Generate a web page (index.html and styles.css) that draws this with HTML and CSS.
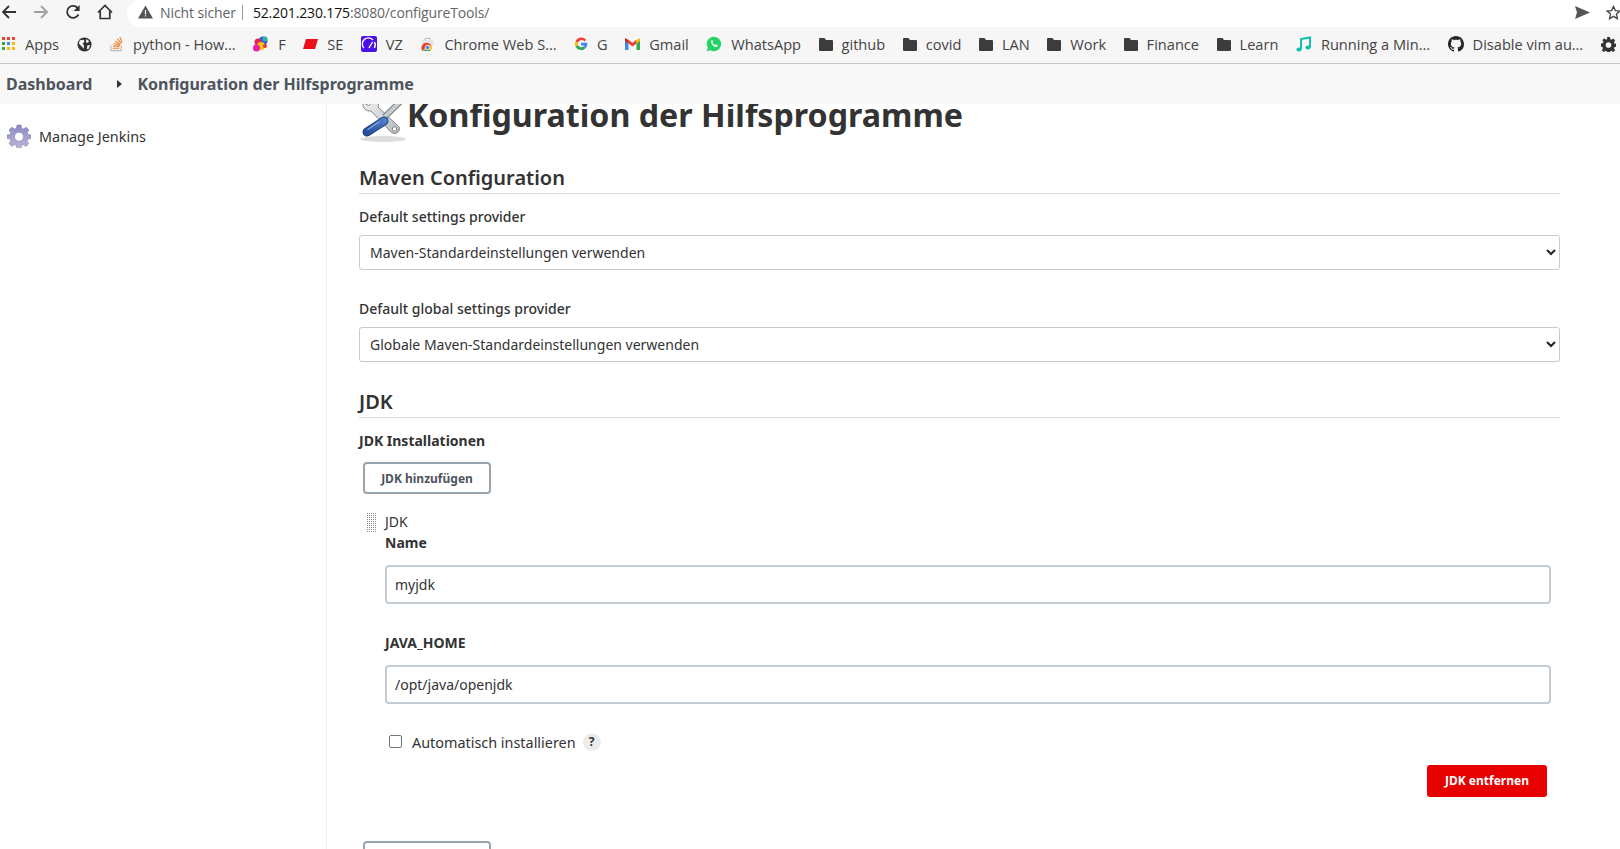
FILE: index.html
```html
<!DOCTYPE html>
<html lang="de">
<head>
<meta charset="utf-8">
<title>Konfiguration der Hilfsprogramme</title>
<link rel="stylesheet" href="styles.css">
</head>
<body>
<header class="toolbar">
  <svg class="nav" width="16" height="16" viewBox="0 0 16 16"><path d="M15 8H2M8 2 2 8l6 6" fill="none" stroke="#333" stroke-width="1.8"/></svg>
  <svg class="nav" width="16" height="16" viewBox="0 0 16 16"><path d="M1 8h13M8 2l6 6-6 6" fill="none" stroke="#a0a0a0" stroke-width="1.8"/></svg>
  <svg class="nav" width="16" height="16" viewBox="0 0 16 16"><path d="M13.5 10.5A6 6 0 1 1 13 4.4" fill="none" stroke="#333" stroke-width="1.8"/><path d="M14.6 1v6h-6z" fill="#333"/></svg>
  <svg class="nav" width="16" height="16" viewBox="0 0 16 16"><path d="M1 8.5 8 1.5l7 7M3.2 7v7.5h9.6V7" fill="none" stroke="#333" stroke-width="1.7"/></svg>
  <div class="omnibox">
    <svg width="15" height="14" viewBox="0 0 15 14"><path d="M7.5.5 15 13.5H0z" fill="#555"/><path d="M6.9 5h1.2v4.4H6.9zM6.9 10.2h1.2v1.3H6.9z" fill="#fff"/></svg>
    <span class="insecure">Nicht sicher</span>
    <span class="url"><b>52.201.230.175</b>:8080/configureTools/</span>
    <svg class="send" width="15" height="13" viewBox="0 0 15 13"><path d="M0 0 15 6.500 0 13l2-6.500z" fill="#555"/></svg>
    <svg class="star" width="15" height="15" viewBox="0 0 16 16"><path d="m8 1.500 2 4.500 4.800.5-3.600 3.200 1 4.800L8 12.100l-4.200 2.400 1-4.800L1.200 6.500 6 6z" fill="none" stroke="#444" stroke-width="1.400"/></svg>
  </div>
</header>
<nav class="bookmarks">
  <span class="bm bm-apps"><svg width="14" height="14" viewBox="0 0 14 14"><path d="M0 0h3v3H0z" fill="#ea4335"/><path d="M5 0h3v3H5z" fill="#ea4335"/><path d="M10 0h3v3h-3z" fill="#ea4335"/><path d="M0 5h3v3H0z" fill="#34a853"/><path d="M5 5h3v3H5z" fill="#4285f4"/><path d="M10 5h3v3h-3z" fill="#fbbc05"/><path d="M0 10h3v3H0z" fill="#34a853"/><path d="M5 10h3v3H5z" fill="#fbbc05"/><path d="M10 10h3v3h-3z" fill="#fbbc05"/></svg>Apps</span>
  <span class="bm bm-noname"><svg width="15" height="15" viewBox="0 0 16 16"><circle cx="8" cy="8" r="7.500" fill="#333"/><path d="M3 3.500 7 3l1 2-2 2 1.500 2-.5 3.500-2-2.500L2 7zM10 2l3 2.500-1.500 1.500-2-.5zM11 9l3-.5-1.500 4-2 .5z" fill="#f6f6f6"/></svg></span>
  <span class="bm"><svg width="15" height="16" viewBox="0 0 16 17"><path d="M2 10v5.500h11V10" fill="none" stroke="#bbb" stroke-width="1.300"/><path d="M4 13h7M4.300 10.500l6.800.8M5 8l6.500 2M6.500 5.500l5.500 3.500M9 3l4 5M11.500 1l2.500 6" stroke="#f48024" stroke-width="1.200" fill="none"/></svg>python - How…</span>
  <span class="bm"><svg width="16" height="16" viewBox="0 0 16 16"><circle cx="10" cy="5" r="4.500" fill="#3c55d8"/><circle cx="12" cy="3" r="2.500" fill="#27b8a8"/><circle cx="5" cy="6" r="3.500" fill="#e3245c"/><circle cx="8" cy="10" r="4" fill="#f7c514"/><circle cx="3.500" cy="12" r="3.500" fill="#e81fae"/><circle cx="12" cy="10" r="2" fill="#e8352c"/></svg>F</span>
  <span class="bm"><svg width="15" height="10" viewBox="0 0 15 10"><path d="M3 0h12l-3 10H0z" fill="#e8101a"/></svg>SE</span>
  <span class="bm"><svg width="16" height="16" viewBox="0 0 16 16"><rect width="16" height="16" rx="2" fill="#4b12e8"/><path d="M2.800 12A6 6 0 0 1 12 4" fill="none" stroke="#fff" stroke-width="1.400"/><path d="M13.500 6A6 6 0 0 1 13.300 12M8 12l3.500-6" fill="none" stroke="#fff" stroke-width="1.400"/></svg>VZ</span>
  <span class="bm"><svg width="15" height="16" viewBox="0 0 15 16"><path d="M5 4V2.500h5V4" fill="none" stroke="#bbb"/><path d="M1.500 4h12l.8 5H.7z" fill="#e6e6e6"/><path d="M2.500 15a5 5 0 0 1 5-8 5 5 0 0 1 4.300 2.500H7.500z" fill="#e34133"/><path d="M3 15 7.500 9.500l4.300 0A5 5 0 0 1 10 15z" fill="#fbc116"/><path d="M3 15h7.500l-3 -3z" fill="#32a651"/><circle cx="7.500" cy="11.500" r="2.200" fill="#4285f4" stroke="#fff" stroke-width=".8"/></svg>Chrome Web S…</span>
  <span class="bm"><svg width="14" height="14" viewBox="0 0 14 14"><path d="M12.200 2.800A6.300 6.300 0 0 0 1.500 4.200L4 6a3.600 3.600 0 0 1 6.400-1.500z" fill="#ea4335"/><path d="M1.500 4.200a6.300 6.300 0 0 0 0 5.600L4 8a3.600 3.600 0 0 1 0-2z" fill="#fbbc05"/><path d="M1.500 9.800a6.300 6.300 0 0 0 10 1.500L9.200 9.600A3.600 3.600 0 0 1 4 8z" fill="#34a853"/><path d="M13.300 5.800H7v2.600h3.500a3 3 0 0 1-1.300 1.200l2.300 1.700a6.300 6.300 0 0 0 1.800-5.500z" fill="#4285f4"/></svg>G</span>
  <span class="bm"><svg width="15" height="12" viewBox="0 0 15 12"><path d="M0 2v10h3.500V4.500z" fill="#4285f4"/><path d="M11.500 4.500V12H15V2z" fill="#34a853"/><path d="M0 0v3l3.500 2.500V2z" fill="#c5221f"/><path d="M3.500 1.500 7.500 5l4-3.500v4l-4 3-4-3z" fill="#ea4335"/><path d="M11.500 2v3.500L15 3V0z" fill="#fbbc05"/></svg>Gmail</span>
  <span class="bm"><svg width="16" height="16" viewBox="0 0 16 16"><path d="M8 .700a7.200 7.200 0 0 0-6.200 10.900L.8 15.300l3.800-1A7.200 7.200 0 1 0 8 .700z" fill="#25d366"/><path d="M5.600 4.300c-1 1-.8 2.500.5 4.200 1.500 1.900 3.300 2.900 4.500 2.300 1-.5 1.100-1.300 1-1.600l-1.700-.9-.8.900c-.9-.2-2.300-1.500-2.700-2.600l.7-.8-.8-1.800z" fill="#fff"/></svg>WhatsApp</span>
  <span class="bm"><svg class="folder" viewBox="0 0 14 13"><path d="M1 0h4.500L7 2h6a1 1 0 0 1 1 1v9a1 1 0 0 1-1 1H1a1 1 0 0 1-1-1V1a1 1 0 0 1 1-1z"/></svg>github</span>
  <span class="bm"><svg class="folder" viewBox="0 0 14 13"><path d="M1 0h4.500L7 2h6a1 1 0 0 1 1 1v9a1 1 0 0 1-1 1H1a1 1 0 0 1-1-1V1a1 1 0 0 1 1-1z"/></svg>covid</span>
  <span class="bm"><svg class="folder" viewBox="0 0 14 13"><path d="M1 0h4.500L7 2h6a1 1 0 0 1 1 1v9a1 1 0 0 1-1 1H1a1 1 0 0 1-1-1V1a1 1 0 0 1 1-1z"/></svg>LAN</span>
  <span class="bm"><svg class="folder" viewBox="0 0 14 13"><path d="M1 0h4.500L7 2h6a1 1 0 0 1 1 1v9a1 1 0 0 1-1 1H1a1 1 0 0 1-1-1V1a1 1 0 0 1 1-1z"/></svg>Work</span>
  <span class="bm"><svg class="folder" viewBox="0 0 14 13"><path d="M1 0h4.500L7 2h6a1 1 0 0 1 1 1v9a1 1 0 0 1-1 1H1a1 1 0 0 1-1-1V1a1 1 0 0 1 1-1z"/></svg>Finance</span>
  <span class="bm"><svg class="folder" viewBox="0 0 14 13"><path d="M1 0h4.500L7 2h6a1 1 0 0 1 1 1v9a1 1 0 0 1-1 1H1a1 1 0 0 1-1-1V1a1 1 0 0 1 1-1z"/></svg>Learn</span>
  <span class="bm"><svg width="16" height="16" viewBox="0 0 16 16"><path d="M5 13V3l9-1.500V11" fill="none" stroke="#10bfae" stroke-width="2"/><ellipse cx="3" cy="13.500" rx="2.600" ry="2" fill="#10bfae"/><ellipse cx="12" cy="11.500" rx="2.600" ry="2" fill="#10bfae"/></svg>Running a Min…</span>
  <span class="bm"><svg width="16" height="16" viewBox="0 0 16 16"><path fill="#24292e" d="M8 0C3.580 0 0 3.580 0 8c0 3.540 2.290 6.530 5.470 7.590.4.070.55-.17.55-.38 0-.19-.01-.82-.01-1.490-2.010.37-2.530-.49-2.690-.94-.09-.23-.48-.94-.82-1.130-.28-.15-.68-.52-.01-.53.630-.01 1.080.58 1.230.82.720 1.210 1.870.87 2.330.66.070-.52.280-.87.510-1.070-1.780-.2-3.640-.89-3.640-3.950 0-.87.310-1.590.820-2.150-.08-.2-.36-1.020.08-2.120 0 0 .67-.21 2.200.82.640-.18 1.320-.27 2-.27s1.360.09 2 .27c1.530-1.040 2.200-.82 2.200-.82.440 1.100.16 1.920.08 2.120.51.560.82 1.270.82 2.150 0 3.070-1.870 3.750-3.650 3.950.29.250.54.730.54 1.480 0 1.070-.01 1.930-.01 2.200 0 .21.150.46.550.38A8.010 8.010 0 0 0 16 8c0-4.420-3.580-8-8-8z"/></svg>Disable vim au…</span>
  <svg class="bm-gear" width="15" height="15" viewBox="0 0 16 16"><path fill="#333" fill-rule="evenodd" d="M6.500 0h3l.4 2.300 1.300.6L13.100 1.500l2 2.300-1.300 1.800.5 1.300 2.200.5v3l-2.200.4-.5 1.300 1.300 1.900-2 2-2-1.300-1.200.5-.4 2.300h-3l-.4-2.300-1.200-.5-2 1.300-2-2 1.300-1.900-.5-1.300L0 10v-3l2.200-.5.500-1.300L1.400 3.400l2-2 1.900 1.400 1.300-.6zM8 5.500a3 3 0 1 0 0 6 3 3 0 0 0 0-6z"/></svg>
</nav>
<nav class="breadcrumbs">
  <a class="crumb">Dashboard</a>
  <svg class="crumb-arrow" width="5" height="8" viewBox="0 0 5 8"><path d="M0 0l5 4-5 4z" fill="#333"/></svg>
  <a class="crumb">Konfiguration der Hilfsprogramme</a>
</nav>
<div class="page">
  <aside class="sidebar">
    <div class="task">
      <svg width="24" height="24" viewBox="0 0 24 24"><defs><linearGradient id="gearfill" x1="0" y1="0" x2="0" y2="1"><stop offset="0" stop-color="#8c8ac6"/><stop offset="1" stop-color="#bdb6d8"/></linearGradient></defs><path fill="url(#gearfill)" stroke="#77749f" stroke-width=".5" fill-rule="evenodd" d="M10 1h4l.6 3.200 1.800.8 2.800-1.800 2.800 2.800-1.800 2.800.8 1.800L24 11v3.500l-3.200.6-.8 1.800 1.800 2.700-2.800 2.800-2.700-1.800-1.800.8-.6 3.100h-4l-.6-3.100-1.800-.8-2.700 1.800L2 19.600l1.800-2.700-.8-1.800L0 14.500V11l3-.4.800-1.800L2 6l2.800-2.800 2.800 1.800 1.800-.8zM12 8.200a4.500 4.500 0 1 0 0 9 4.500 4.500 0 0 0 0-9z"/></svg>
      <span>Manage Jenkins</span>
    </div>
  </aside>
  <main class="content">
    <h1 class="title">
      <svg class="title-icon" width="48" height="48" viewBox="0 0 48 48"><defs><linearGradient id="metal" x1="0" y1="0" x2="1" y2="1"><stop offset="0" stop-color="#f4f4f4"/><stop offset="1" stop-color="#b4b8bc"/></linearGradient><linearGradient id="handle" x1="1" y1="0" x2="0" y2="1"><stop offset="0" stop-color="#4f7cc8"/><stop offset="1" stop-color="#24509e"/></linearGradient></defs><ellipse cx="24" cy="43" rx="23" ry="3" fill="#dcdcdc"/><path d="M38 29 19 11c1.500-4-.5-8-4.500-9.500l-1 .3L13 7l-3.500 2.500-4.500-2.500-1 .5C3.500 12 7 15.500 12 15l19 20c2 2.500 5.500 3.500 8 1s2-5 -1-7z" fill="url(#metal)" stroke="#83878b"/><circle cx="35.500" cy="33" r="2.200" fill="#fff" stroke="#83878b"/><path d="M25.500 21 42 5" stroke="#777b7f" stroke-width="6"/><path d="M25.500 21 42 5" stroke="#c6cacd" stroke-width="4"/><path d="m40 6 5-5 2 2-5 5z" fill="#9a9ea2"/><path d="M25 25 8 36" stroke="#1b3c7f" stroke-width="9" stroke-linecap="round"/><path d="M25 25 8 36" stroke="url(#handle)" stroke-width="7" stroke-linecap="round"/><path d="M20 26 9 33.500" stroke="#86a6dc" stroke-width="1.300" stroke-linecap="round"/></svg>
      <span class="title-text">Konfiguration der Hilfsprogramme</span>
    </h1>
    <section class="section">
      <h2 class="section-head">Maven Configuration</h2>
      <label class="field-label">Default settings provider</label>
      <div class="select"><span>Maven-Standardeinstellungen verwenden</span><svg width="10" height="7" viewBox="0 0 10 7"><path d="M1 1l4 4 4-4" fill="none" stroke="#222" stroke-width="2"/></svg></div>
      <label class="field-label second">Default global settings provider</label>
      <div class="select"><span>Globale Maven-Standardeinstellungen verwenden</span><svg width="10" height="7" viewBox="0 0 10 7"><path d="M1 1l4 4 4-4" fill="none" stroke="#222" stroke-width="2"/></svg></div>
    </section>
    <section class="section jdk">
      <h2 class="section-head">JDK</h2>
      <div class="bold-label">JDK Installationen</div>
      <div class="btn-wrap"><button class="btn">JDK hinzufügen</button></div>
      <div class="repeated">
        <div class="repeated-head"><span class="handle"></span><span>JDK</span></div>
        <div class="repeated-body">
          <div class="bold-label tight">Name</div>
          <div class="text-input">myjdk</div>
          <div class="bold-label home">JAVA_HOME</div>
          <div class="text-input">/opt/java/openjdk</div>
          <div class="auto">
            <span class="check"></span>
            <span>Automatisch installieren</span>
            <span class="help">?</span>
          </div>
          <div class="remove-row"><button class="btn-danger">JDK entfernen</button></div>
        </div>
      </div>
      <div class="btn-wrap last"><button class="btn">JDK hinzufügen</button></div>
    </section>
  </main>
</div>
</body>
</html>
```
FILE: styles.css
```css
* { box-sizing: border-box; }
html, body { height: 100%; }
body {
  margin: 0;
  height: 849px;
  overflow: hidden;
  background: #fff;
  color: #333;
  font-family: "Noto Sans", "Open Sans", sans-serif;
  font-size: 14px;
  display: flex;
  flex-direction: column;
}
.toolbar {
  height: 27px;
  flex: none;
  display: flex;
  align-items: center;
  padding-left: 1px;
  background: #f6f6f6;
  gap: 16px;
}
.nav { flex: none; margin-bottom: 3px; }
.omnibox {
  flex: 1;
  height: 27px;
  margin-left: -2px;
  padding: 0 0 3px 11px;
  display: flex;
  align-items: center;
  background: #fff;
  border-radius: 14px 0 0 14px;
  font-family: "Open Sans", sans-serif;
  font-size: 14px;
  color: #5f6368;
}
.insecure { margin-left: 7px; padding-right: 6px; border-right: 1px solid #999; line-height: 15px; letter-spacing: -0.1px; }
.url { margin-left: 10px; color: #666; letter-spacing: -0.15px; }
.url b { font-weight: 400; color: #111; }
.send { margin-left: auto; margin-right: 1px; }
.star { margin-left: 15px; margin-right: -1px; }
.bookmarks {
  height: 37px;
  flex: none;
  display: flex;
  align-items: center;
  padding: 0 0 2px 2px;
  gap: 17.5px;
  background: #f6f6f6;
  border-bottom: 1px solid #c6c6c6;
  font-family: "Open Sans", sans-serif;
  font-size: 14.6px;
  color: #444;
  white-space: nowrap;
}
.bm { display: flex; align-items: center; gap: 9px; }
.folder { width: 14px; height: 13px; fill: #3c3c3c; }
.bm-gear { flex: none; }
.breadcrumbs {
  position: relative;
  z-index: 1;
  height: 40px;
  flex: none;
  display: flex;
  align-items: center;
  padding-left: 6px;
  background: #f8f8f8;
  font-size: 16px;
  font-weight: 700;
  color: #4d545d;
}
.crumb-arrow { margin: 0 15px 0 25px; }
.page {
  flex: 1;
  min-height: 0;
  display: flex;
}
.sidebar {
  width: 327px;
  flex: none;
  border-right: 1px solid #eee;
  padding: 19px 0 0 7px;
  font-size: 14.4px;
}
.task { display: flex; align-items: center; gap: 8px; height: 26px; }
.content {
  flex: 1;
  min-width: 0;
  padding: 0 60px 0 32px;
}
.title {
  display: flex;
  align-items: flex-start;
  margin: 0;
  height: 40px;
  font-size: 32.2px;
  font-weight: 700;
  line-height: 22px;
  color: #333;
  white-space: nowrap;
}
.title-icon { flex: none; margin-top: -8px; }
.section-head {
  margin: 0;
  font-size: 20px;
  font-weight: 600;
  line-height: 27px;
  height: 30px;
  border-bottom: 1px solid #ddd;
  color: #333;
}
.section { padding-top: 20px; }
.field-label { display: block; margin-top: 13px; line-height: 20px; font-weight: 500; }
.field-label.second { margin-top: 29px; }
.select {
  height: 35px;
  margin-top: 8px;
  border: 1px solid #c3ccd1;
  border-radius: 3px;
  display: flex;
  align-items: center;
  justify-content: space-between;
  padding: 0 3px 0 10px;
  color: #333;
  background: #fff;
}
.jdk { padding-top: 26px; }
.bold-label { font-weight: 700; line-height: 20px; margin-top: 13px; color: #333; }
.btn-wrap { padding: 11px 0 0 4px; }
.btn {
  width: 128px;
  height: 32px;
  padding: 0;
  background: #fff;
  border: 2px solid #98a4ae;
  border-radius: 4px;
  font: 700 12px "Noto Sans", sans-serif;
  color: #4d545d;
}
.repeated { margin-top: 16px; }
.repeated-head { display: flex; align-items: center; padding-left: 7px; gap: 8px; height: 23px; }
.handle {
  width: 11px;
  height: 20px;
  background-image: linear-gradient(90deg, #fff 50%, transparent 50%), linear-gradient(#fff 50%, #8a8a8a 50%);
  background-size: 2px 2px;
}
.repeated-body { padding: 0 9px 0 26px; }
.bold-label.tight { margin-top: 0; }
.bold-label.home { margin-top: 29px; }
.text-input {
  height: 39px;
  margin-top: 12px;
  border: 2px solid #c3ccd5;
  border-radius: 4px;
  padding: 0 8px;
  display: flex;
  align-items: center;
}
.auto { display: flex; align-items: center; margin-top: 28px; height: 20px; padding-left: 4px; font-size: 14.4px; }
.check {
  width: 13px;
  height: 13px;
  margin: -2px 10px 0 0;
  border: 1px solid #767676;
  border-radius: 2px;
  background: #fff;
}
.help {
  width: 18px;
  height: 18px;
  margin-left: 7px;
  border-radius: 50%;
  background: #ececec;
  text-align: center;
  font-size: 12px;
  font-weight: 700;
  line-height: 18px;
}
.remove-row { display: flex; justify-content: flex-end; padding: 13px 4px 0 0; }
.btn-danger {
  width: 120px;
  height: 32px;
  padding: 0 0 2px;
  border: 0;
  border-radius: 3px;
  background: #e60000;
  color: #fff;
  font: 700 12px "Noto Sans", sans-serif;
}
.btn-wrap.last { padding-top: 44px; }
```
